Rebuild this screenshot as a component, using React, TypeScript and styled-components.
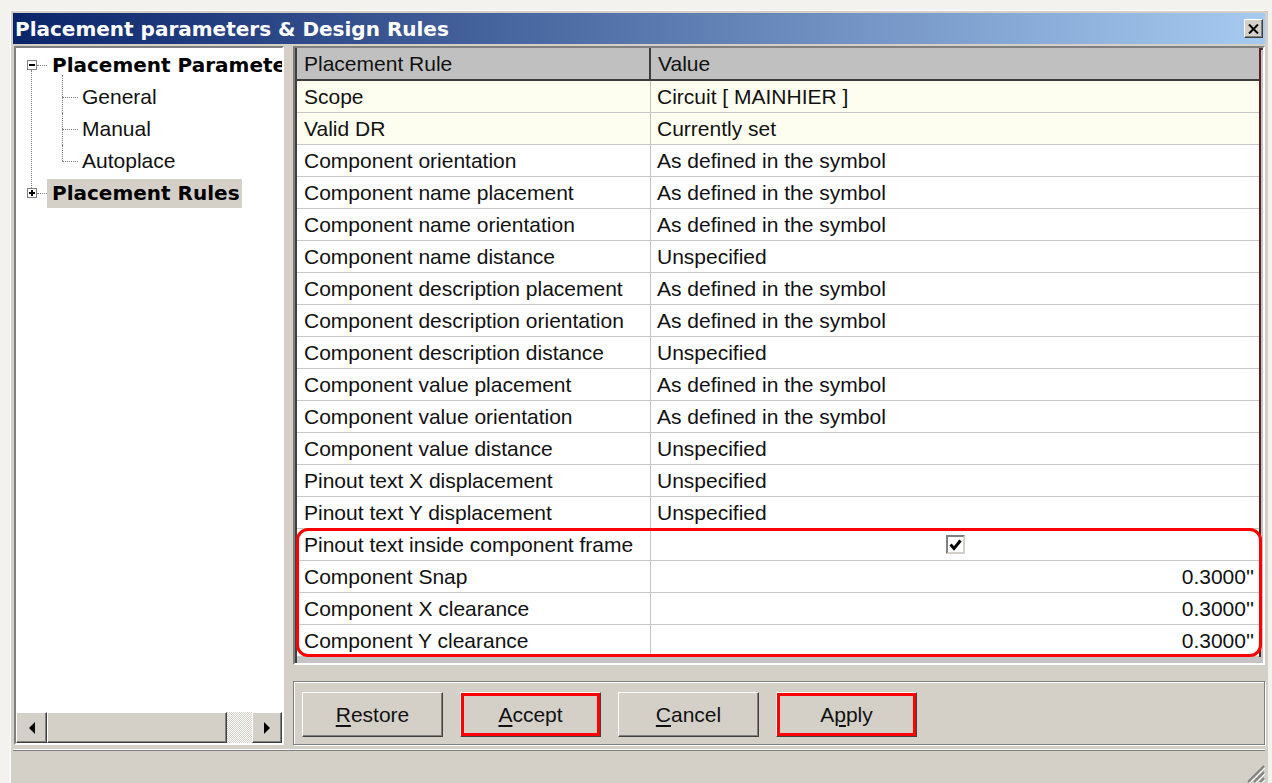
import styled, { createGlobalStyle, css } from "styled-components";

const GlobalStyle = createGlobalStyle`
  * { box-sizing: border-box; }
  html, body { margin: 0; padding: 0; background: #f3f2ee; }
  body {
    width: 1272px;
    height: 783px;
    overflow: hidden;
    font-family: "Liberation Sans", Arial, sans-serif;
    font-size: 21px;
    color: #111;
  }
`;

const raised = css`
  background: #d4d0c8;
  border: 1px solid;
  border-color: #ffffff #404040 #404040 #ffffff;
  box-shadow: inset -1px -1px #808080, inset 1px 1px #d4d0c8;
`;

const sunken = css`
  border: 2px solid;
  border-color: #808080 #ffffff #ffffff #808080;
`;

const Window = styled.div`
  margin: 10px 0 0 10px;
  width: 1258px;
  height: 773px;
  padding: 2px 3px 0 2px;
  background: #d4d0c8;
  border-top: 1px solid #ffffff;
  border-left: 1px solid #ffffff;
  display: flex;
  flex-direction: column;
`;

const TitleBar = styled.div`
  height: 31px;
  flex: 0 0 31px;
  padding: 0 2px;
  display: flex;
  align-items: center;
  justify-content: space-between;
  background: linear-gradient(to right, #0a246a, #a6caf0);
  color: #ffffff;
  font-family: "DejaVu Sans", Verdana, sans-serif;
  font-weight: bold;
  font-size: 20px;
  white-space: nowrap;
`;

const CloseButton = styled.button`
  ${raised};
  width: 19px;
  height: 19px;
  padding: 0;
  display: flex;
  align-items: center;
  justify-content: center;
`;

const Body = styled.div`
  flex: 1;
  display: flex;
  gap: 9px;
  padding: 2px 0 5px 1px;
  min-height: 0;
`;

/* ---- navigation tree ---- */

const TreePanel = styled.div`
  ${sunken};
  width: 270px;
  flex: 0 0 270px;
  background: #ffffff;
  display: flex;
  flex-direction: column;
`;

const TreeList = styled.div`
  flex: 1;
  overflow: hidden;
  padding-top: 1px;
`;

const TreeRow = styled.div`
  position: relative;
  height: 32px;
  display: flex;
  align-items: center;
  white-space: nowrap;
`;

const Expander = styled.span<{ $open: boolean }>`
  position: relative;
  flex: 0 0 10px;
  width: 10px;
  height: 10px;
  margin-left: 11px;
  border: 1px solid #808080;
  background: #ffffff;

  &::before {
    content: "";
    position: absolute;
    left: 1px;
    top: 3px;
    width: 6px;
    height: 2px;
    background: #000;
  }

  ${({ $open }) =>
    !$open &&
    css`
      &::after {
        content: "";
        position: absolute;
        left: 3px;
        top: 1px;
        width: 2px;
        height: 6px;
        background: #000;
      }
    `}
`;

const Connector = styled.span<{ $width: number }>`
  flex: 0 0 ${({ $width }) => $width}px;
  border-top: 1px dotted #808080;
`;

const RootLabel = styled.span<{ $selected?: boolean }>`
  font-family: "DejaVu Sans", Verdana, sans-serif;
  font-weight: bold;
  font-size: 20px;
  height: 29px;
  line-height: 29px;
  padding: 0 2px 0 5px;
  color: #000;
  background: ${({ $selected }) => ($selected ? "#d4d0c8" : "transparent")};
`;

const TreeChildren = styled.div`
  position: relative;

  &::before {
    content: "";
    position: absolute;
    left: 15px;
    top: -11px;
    bottom: -11px;
    border-left: 1px dotted #808080;
  }
`;

const ChildRow = styled(TreeRow)`
  padding-left: 46px;

  &::before {
    content: "";
    position: absolute;
    left: 46px;
    top: 0;
    bottom: 0;
    border-left: 1px dotted #808080;
  }
  &:first-child::before {
    top: -6px;
  }
  &:last-child::before {
    bottom: 50%;
  }
`;

const ChildLabel = styled.span`
  padding-left: 4px;
`;

const HScroll = styled.div`
  height: 31px;
  flex: 0 0 31px;
  display: flex;
`;

const ScrollButton = styled.div<{ $width: number }>`
  ${raised};
  flex: 0 0 ${({ $width }) => $width}px;
  display: flex;
  align-items: center;
  justify-content: center;
`;

const Arrow = styled.span<{ $dir: "left" | "right" }>`
  width: 0;
  height: 0;
  border-top: 6px solid transparent;
  border-bottom: 6px solid transparent;
  ${({ $dir }) =>
    $dir === "left"
      ? css`border-right: 6px solid #000;`
      : css`border-left: 6px solid #000;`}
`;

const ScrollThumb = styled.div`
  ${raised};
  flex: 0 0 180px;
`;

const ScrollTrack = styled.div`
  flex: 1;
  background: repeating-conic-gradient(#ffffff 0 25%, #d4d0c8 0 50%) 0 0 / 2px 2px;
`;

/* ---- rules grid ---- */

const RightColumn = styled.div`
  flex: 1;
  display: flex;
  flex-direction: column;
  gap: 16px;
`;

const TablePanel = styled.div`
  ${sunken};
  height: 619px;
  flex: 0 0 619px;
  padding: 0 2px 2px 2px;
  background: #c4c4c4;
  box-shadow: inset 2px 2px #404040;
`;

const Grid = styled.div`
  border-right: 2px solid #5e1f1f;
  background: #c0c0c0;
`;

const HeaderRow = styled.div`
  display: flex;
  height: 33px;
  border-bottom: 2px solid #3c3c3c;
  background: #c0c0c0;
`;

const HeaderCell = styled.div<{ $first?: boolean }>`
  padding-left: 7px;
  line-height: 31px;
  ${({ $first }) =>
    $first
      ? css`
          flex: 0 0 354px;
          border-right: 2px solid #3c3c3c;
        `
      : css`
          flex: 1;
        `}
`;

const RuleRow = styled.div<{ $tint?: boolean }>`
  display: flex;
  height: 32px;
  border-bottom: 1px solid #c8c8c8;
  background: ${({ $tint }) => ($tint ? "#fefef0" : "#ffffff")};
  white-space: nowrap;
`;

const NameCell = styled.div`
  flex: 0 0 354px;
  padding-left: 7px;
  line-height: 31px;
  border-right: 1px solid #c4c4c4;
`;

const ValueCell = styled.div<{ $align?: "left" | "center" | "right" }>`
  flex: 1;
  padding: 0 5px 0 6px;
  line-height: 31px;
  display: flex;
  align-items: center;
  justify-content: ${({ $align }) =>
    $align === "right" ? "flex-end" : $align === "center" ? "center" : "flex-start"};
`;

const CheckBox = styled.span`
  width: 19px;
  height: 19px;
  border: 2px solid;
  border-color: #808080 #d4d0c8 #d4d0c8 #808080;
  background: #ffffff;
  display: flex;
  align-items: center;
  justify-content: center;
`;

const HighlightGroup = styled.div`
  position: relative;

  &::after {
    content: "";
    position: absolute;
    inset: -1px -3px 0 -1px;
    border: 3px solid #ff0000;
    border-radius: 12px;
    pointer-events: none;
  }
`;

/* ---- buttons and status ---- */

const ButtonPanel = styled.div`
  height: 64px;
  flex: 0 0 64px;
  display: flex;
  gap: 17px;
  padding: 10px 8px;
  border: 1px solid #808080;
  box-shadow: inset 1px 1px #ffffff, 1px 1px #ffffff;
`;

const DialogButton = styled.button<{ $marked?: boolean }>`
  ${raised};
  width: 141px;
  height: 45px;
  font-family: "Liberation Sans", Arial, sans-serif;
  font-size: 21px;
  color: #111;
  padding: 0;
  ${({ $marked }) =>
    $marked &&
    css`
      box-shadow: inset 0 0 0 3px #ff0000, inset -1px -1px #808080;
    `}

  u {
    text-decoration-thickness: 2px;
    text-underline-offset: 3px;
  }
`;

const StatusBar = styled.div`
  height: 33px;
  flex: 0 0 33px;
  border-top: 1px solid #808080;
  box-shadow: 0 -1px #ffffff;
  display: flex;
  justify-content: flex-end;
  align-items: flex-end;
`;

const rules = [
  { name: "Scope", value: "Circuit [ MAINHIER ]", tint: true },
  { name: "Valid DR", value: "Currently set", tint: true },
  { name: "Component orientation", value: "As defined in the symbol" },
  { name: "Component name placement", value: "As defined in the symbol" },
  { name: "Component name orientation", value: "As defined in the symbol" },
  { name: "Component name distance", value: "Unspecified" },
  { name: "Component description placement", value: "As defined in the symbol" },
  { name: "Component description orientation", value: "As defined in the symbol" },
  { name: "Component description distance", value: "Unspecified" },
  { name: "Component value placement", value: "As defined in the symbol" },
  { name: "Component value orientation", value: "As defined in the symbol" },
  { name: "Component value distance", value: "Unspecified" },
  { name: "Pinout text X displacement", value: "Unspecified" },
  { name: "Pinout text Y displacement", value: "Unspecified" },
];

const spacingRules = [
  { name: "Component Snap", value: "0.3000''" },
  { name: "Component X clearance", value: "0.3000''" },
  { name: "Component Y clearance", value: "0.3000''" },
];

const App = () => {
  return (
    <>
      <GlobalStyle />
      <Window>
        <TitleBar>
          <span>Placement parameters &amp; Design Rules</span>
          <CloseButton aria-label="Close">
            <svg width="11" height="10" viewBox="0 0 11 10">
              <path d="M1 0.5 L10 9.5 M10 0.5 L1 9.5" stroke="#000" strokeWidth="2" />
            </svg>
          </CloseButton>
        </TitleBar>

        <Body>
          <TreePanel>
            <TreeList>
              <TreeRow>
                <Expander $open />
                <Connector $width={10} />
                <RootLabel>Placement Parameters</RootLabel>
              </TreeRow>
              <TreeChildren>
                {["General", "Manual", "Autoplace"].map((item) => (
                  <ChildRow key={item}>
                    <Connector $width={16} />
                    <ChildLabel>{item}</ChildLabel>
                  </ChildRow>
                ))}
              </TreeChildren>
              <TreeRow>
                <Expander $open={false} />
                <Connector $width={10} />
                <RootLabel $selected>Placement Rules</RootLabel>
              </TreeRow>
            </TreeList>
            <HScroll>
              <ScrollButton $width={31}>
                <Arrow $dir="left" />
              </ScrollButton>
              <ScrollThumb />
              <ScrollTrack />
              <ScrollButton $width={30}>
                <Arrow $dir="right" />
              </ScrollButton>
            </HScroll>
          </TreePanel>

          <RightColumn>
            <TablePanel>
              <Grid>
                <HeaderRow>
                  <HeaderCell $first>Placement Rule</HeaderCell>
                  <HeaderCell>Value</HeaderCell>
                </HeaderRow>
                {rules.map((rule) => (
                  <RuleRow key={rule.name} $tint={rule.tint}>
                    <NameCell>{rule.name}</NameCell>
                    <ValueCell>{rule.value}</ValueCell>
                  </RuleRow>
                ))}
                <HighlightGroup>
                  <RuleRow>
                    <NameCell>Pinout text inside component frame</NameCell>
                    <ValueCell $align="center">
                      <CheckBox>
                        <svg width="13" height="12" viewBox="0 0 13 12">
                          <path d="M1.5 5.5 L5 9.5 L11.5 1.5" fill="none" stroke="#000" strokeWidth="3" />
                        </svg>
                      </CheckBox>
                    </ValueCell>
                  </RuleRow>
                  {spacingRules.map((rule) => (
                    <RuleRow key={rule.name}>
                      <NameCell>{rule.name}</NameCell>
                      <ValueCell $align="right">{rule.value}</ValueCell>
                    </RuleRow>
                  ))}
                </HighlightGroup>
              </Grid>
            </TablePanel>

            <ButtonPanel>
              <DialogButton>
                <u>R</u>estore
              </DialogButton>
              <DialogButton $marked>
                <u>A</u>ccept
              </DialogButton>
              <DialogButton>
                <u>C</u>ancel
              </DialogButton>
              <DialogButton $marked>
                A<u>p</u>ply
              </DialogButton>
            </ButtonPanel>
          </RightColumn>
        </Body>

        <StatusBar>
          <svg width="20" height="20" viewBox="0 0 20 20">
            <path d="M19 3 L3 19 M19 9 L9 19 M19 15 L15 19" stroke="#808080" strokeWidth="2" />
            <path d="M20 5 L5 20 M20 11 L11 20 M20 17 L17 20" stroke="#ffffff" strokeWidth="1" />
          </svg>
        </StatusBar>
      </Window>
    </>
  );
};

export default App;
